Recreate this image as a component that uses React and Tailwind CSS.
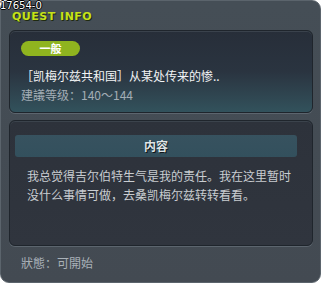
import React from "react";

const cjk = { fontFamily: '"Noto Sans CJK SC", "Noto Sans CJK TC", sans-serif' };

const QuestInfo = () => {
    return (
        <div className="w-[322px] h-[284px] bg-white relative">
            <div className="absolute left-0 top-0 z-10 text-[10px] leading-[11px] text-white font-['DejaVu_Sans',sans-serif] [text-shadow:1px_0_0_#000,-1px_0_0_#000,0_1px_0_#000,0_-1px_0_#000]">
                17654-0
            </div>
            <div className="w-[321px] h-[283px] rounded-[9px] border border-[#5b646c] bg-gradient-to-b from-[#454e56] to-[#434a52] flex flex-col">
                <div className="h-[29px] pl-[11px] pt-[11px] text-[11px] leading-[10px] font-bold tracking-[0.5px] text-[#c5e21a] font-['DejaVu_Sans',sans-serif] [text-shadow:1px_1px_0_#1f2a10]">
                    QUEST INFO
                </div>
                <div className="ml-[8px] w-[304px] h-[83px] rounded-[6px] border border-[#1f252c] shadow-[inset_0_1px_0_#3a424c,0_1px_0_#5c656e] bg-gradient-to-b from-[#272e39] via-[#2a3440] to-[#32525c] pl-[11px] pt-[10px]" style={cjk}>
                    <div className="w-[59px] h-[15px] rounded-full bg-[#8fb41f] flex items-center justify-center text-[11px] font-bold text-white leading-none">
                        一般
                    </div>
                    <div className="mt-[13px] text-[12px] leading-[14px] text-[#f2f4f5] whitespace-nowrap">
                        ［凯梅尔兹共和国］从某处传来的惨..
                    </div>
                    <div className="mt-[5px] text-[12px] leading-[14px] text-[#a3adb5] whitespace-nowrap">
                        建議等级：140～144
                    </div>
                </div>
                <div className="mt-[7px] ml-[8px] w-[304px] h-[126px] rounded-[6px] border border-[#1f252c] shadow-[inset_0_1px_0_#3b434c,0_1px_0_#5c656e] bg-gradient-to-b from-[#2d323b] to-[#30353e] pl-[5px] pt-[14px]" style={cjk}>
                    <div className="w-[282px] h-[22px] rounded-[3px] bg-gradient-to-b from-[#37525f] to-[#33505d] flex items-center justify-center text-[12px] font-bold text-[#dfe4e6] [text-shadow:1px_1px_0_#101418]">
                        内容
                    </div>
                    <div className="mt-[9px] pl-[12px] text-[12px] leading-[19px] text-[#c9cdd1]">
                        <div className="whitespace-nowrap">我总觉得吉尔伯特生气是我的责任。我在这里暂时</div>
                        <div className="whitespace-nowrap">没什么事情可做，去桑凯梅尔兹转转看看。</div>
                    </div>
                </div>
                <div className="pl-[20px] pt-[10px] text-[12px] leading-[14px] text-[#a9b1b8]" style={cjk}>
                    狀態：可開始
                </div>
            </div>
        </div>
    );
};

export default function App() {
    return <QuestInfo/>;
}
